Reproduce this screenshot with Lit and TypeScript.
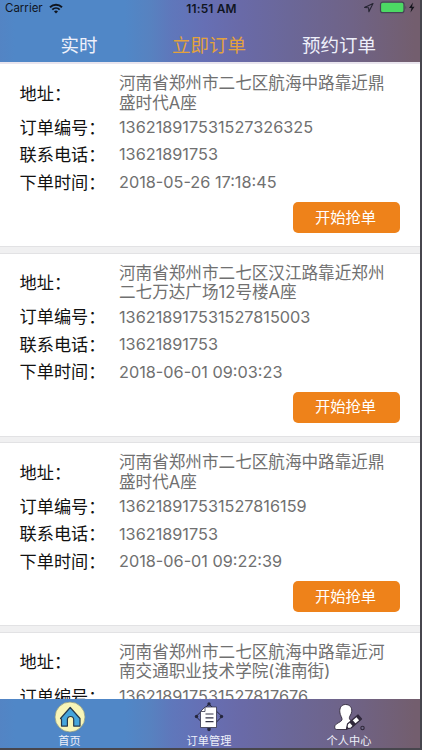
import { LitElement, html, css, svg, nothing } from "lit";
import { customElement, property } from "lit/decorators.js";

interface Order {
  address: [string, string];
  id: string;
  phone?: string;
  time?: string;
}

const ORDERS: Order[] = [
  { address: ["河南省郑州市二七区航海中路靠近鼎", "盛时代A座"], id: "136218917531527326325", phone: "13621891753", time: "2018-05-26 17:18:45" },
  { address: ["河南省郑州市二七区汉江路靠近郑州", "二七万达广场12号楼A座"], id: "136218917531527815003", phone: "13621891753", time: "2018-06-01 09:03:23" },
  { address: ["河南省郑州市二七区航海中路靠近鼎", "盛时代A座"], id: "136218917531527816159", phone: "13621891753", time: "2018-06-01 09:22:39" },
  { address: ["河南省郑州市二七区航海中路靠近河", "南交通职业技术学院(淮南街)"], id: "136218917531527817676" },
];

@customElement("order-card")
class OrderCard extends LitElement {
  @property({ attribute: false }) order!: Order;

  static styles = css`
    :host { display: block; flex: none; height: 182px; padding: 9.500px 20.500px 0 19.500px; box-sizing: border-box; background: #fff; }
    .row { display: flex; align-items: center; height: 27.500px; white-space: nowrap; }
    .row.address { height: 40px; margin-bottom: .5px; }
    .label { width: 99.500px; flex: none; font-size: 17.200px; line-height: 24px; color: #111; }
    .value { font-size: 16.600px; line-height: 19.600px; color: #707070; }
    .number { font-size: 16.250px; }
    .actions { display: flex; justify-content: flex-end; padding-top: 5.500px; }
    .grab { display: flex; align-items: center; justify-content: center; width: 107px; height: 31px; padding: 0 1px 0 0; box-sizing: border-box; border: 0; border-radius: 5px; background: #ee821a; color: #fff; font: inherit; font-size: 15.300px; line-height: 22px; }
  `;

  private row(label: string, value: string) {
    return html`<div class="row"><span class="label">${label}：</span><span class="value number">${value}</span></div>`;
  }

  render() {
    const o = this.order;
    return html`
      <div class="row address"><span class="label">地址：</span><span class="value">${o.address[0]}<br />${o.address[1]}</span></div>
      ${this.row("订单编号", o.id)}
      ${o.phone ? this.row("联系电话", o.phone) : nothing}
      ${o.time ? html`${this.row("下单时间", o.time)}<div class="actions"><button class="grab">开始抢单</button></div>` : nothing}
    `;
  }
}

const homeIcon = svg`<svg width="32" height="32" viewBox="0 0 32 32">
  <circle cx="16" cy="16" r="15" fill="#f8f5b8" stroke="#8d9a86" stroke-width=".8"/>
  <path d="M6.500 17.500 16.200 6.500 26 17.500v7.600h-6.300v-6.300q0-3.300-3.100-3.300-3.200 0-3.200 3.300v6.300H7.500v-6.900z" fill="#45a5dc" stroke="#26384c" stroke-width="1.200" stroke-linejoin="round"/>
</svg>`;

const ordersIcon = svg`<svg width="32" height="32" viewBox="0 0 32 32">
  <path d="M16 3 29 15.500 16 28.500 3 15.500z" fill="none" stroke="#25263d" stroke-width="1"/>
  <g fill="#25263d"><circle cx="16" cy="3" r="1.700"/><circle cx="28.500" cy="15.500" r="1.700"/><circle cx="16" cy="28.500" r="1.700"/><circle cx="3.500" cy="15.500" r="1.700"/></g>
  <path d="M7.500 10.500 12 6H23.500v20.500H7.500z" fill="#fff" stroke="#35354a" stroke-width=".8"/>
  <path d="M7.500 10.500H12V6" fill="none" stroke="#35354a" stroke-width=".8"/>
  <path d="M12.500 13h8M12.500 16.800h8M12.500 20.600h8" stroke="#343548" stroke-width="1.200"/>
</svg>`;

const profileIcon = svg`<svg width="34" height="32" viewBox="0 0 34 32">
  <path d="M13.500 3.500c4.300 0 6.700 3 6.200 7-.3 3-2.200 4.400-2.300 6-.2 2 .8 2.700 2.300 3.500L15.500 24.500 15 28.500H4.700c-2 0-2.300-2-1.800-3.700.8-2.700 6.500-3.500 7.100-6 .5-2-2-4.300-2.200-7.800-.3-4.300 1.700-7.500 5.700-7.500z" fill="#fff" stroke="#30283b" stroke-width=".9"/>
  <path d="m14.500 28 1-5L26 14l3.500 4L19 27z" fill="#fff" stroke="#30283b" stroke-width="1.200" stroke-linejoin="round"/>
  <path d="m17.500 21.500 3-2.600 3.500 4-3 2.600zM24 15.700l2-1.700 3.500 4-2 1.700zM14.500 28l.6-2.800 1.700 2z" fill="#30283b"/>
  <circle cx="30.500" cy="27" r="1.700" fill="#6c6685" stroke="#30283b" stroke-width="1.100"/>
</svg>`;

@customElement("app-root")
export class AppRoot extends LitElement {
  static styles = css`
    :host {
      --bar: linear-gradient(90deg, #5384c4 0, #5087c7 15px, #5087c7 125px, #5782c0 150px, #5f77bb 172px, #666fb4 205px, #696aa8 240px, #6b6798 290px, #6f6387 350px, #735e6e 415px);
      display: flex; flex-direction: column; width: 422px; height: 750px; overflow: hidden; box-sizing: border-box;
      border-right: 2px solid #47464d; border-bottom: 2px solid #47464d; background: #f0f0f1;
      font-family: Inter, "Noto Sans CJK SC", sans-serif;
    }
    .header { flex: none; height: 62px; background: var(--bar); }
    .status { display: grid; grid-template-columns: 1fr auto 1fr; align-items: center; height: 16px; padding: 0 4px 0 5px; font-size: 11.500px; color: #10151f; }
    .carrier, .power { display: flex; align-items: center; gap: 6px; }
    .power { justify-content: flex-end; gap: 0; }
    .clock { font-weight: 600; font-size: 11.900px; padding-left: 2px; letter-spacing: .2px; }
    .tabs { display: flex; height: 45.500px; font-size: 18.500px; color: #eef0fa; }
    .tab { display: flex; align-items: center; justify-content: center; padding-top: 9.500px; box-sizing: border-box; white-space: nowrap; }
    .tab.now { width: 158px; }
    .tab.instant { width: 102px; color: #e3a23c; }
    .tab.booked { width: 158px; }
    .list { flex: 1; min-height: 0; display: flex; flex-direction: column; overflow: hidden; border-top: 2px solid #e9e5ee; }
    .gap { flex: none; height: 7.600px; box-sizing: border-box; border: solid #e2e2e4; border-width: 1px 0; background: #f0f0f1; }
    .nav { flex: none; display: flex; height: 49px; background: var(--bar); color: #eef0fa; font-size: 11.200px; }
    .item { width: 140px; display: flex; flex-direction: column; align-items: center; gap: 1px; padding-top: 2px; line-height: 14px; box-sizing: border-box; }
    .item:first-child { width: 139px; }
    svg { display: block; flex: none; }
  `;

  render() {
    return html`
      <div class="header">
        <div class="status">
          <span class="carrier">Carrier
            <svg width="14" height="11" viewBox="0 0 14 11" fill="none" stroke="#10151f" stroke-width="1.900"><path d="M1 4.200a8.600 8.600 0 0 1 12 0M3.300 6.600a5.300 5.300 0 0 1 7.400 0"/><path d="m7 10.500-2-2.100a2.900 2.900 0 0 1 4 0z" fill="#10151f" stroke="none"/></svg>
          </span>
          <span class="clock">11:51 AM</span>
          <span class="power">
            <svg width="56" height="14" viewBox="0 0 56 14">
              <path d="M13 2.500 4.600 6.400l4 .3.300 4z" fill="none" stroke="#252432" stroke-width="1.100" stroke-linejoin="round"/>
              <rect x="20.500" y="1.200" width="23.500" height="10.400" rx="2.200" fill="#4cd964" stroke="#454354" stroke-width="1.200"/>
              <path d="M45.500 4.700q1.500 1.800 0 3.600z" fill="#454354"/>
              <path d="m53 1.500-4 5.500h2.500L50.500 11.500l4-5.700H52z" fill="#15141c"/>
            </svg>
          </span>
        </div>
        <div class="tabs"><span class="tab now">实时</span><span class="tab instant">立即订单</span><span class="tab booked">预约订单</span></div>
      </div>
      <div class="list">${ORDERS.map((o, i) => html`${i ? html`<div class="gap"></div>` : nothing}<order-card .order=${o}></order-card>`)}</div>
      <div class="nav">
        <div class="item">${homeIcon}<span>首页</span></div>
        <div class="item">${ordersIcon}<span>订单管理</span></div>
        <div class="item">${profileIcon}<span>个人中心</span></div>
      </div>
    `;
  }
}
